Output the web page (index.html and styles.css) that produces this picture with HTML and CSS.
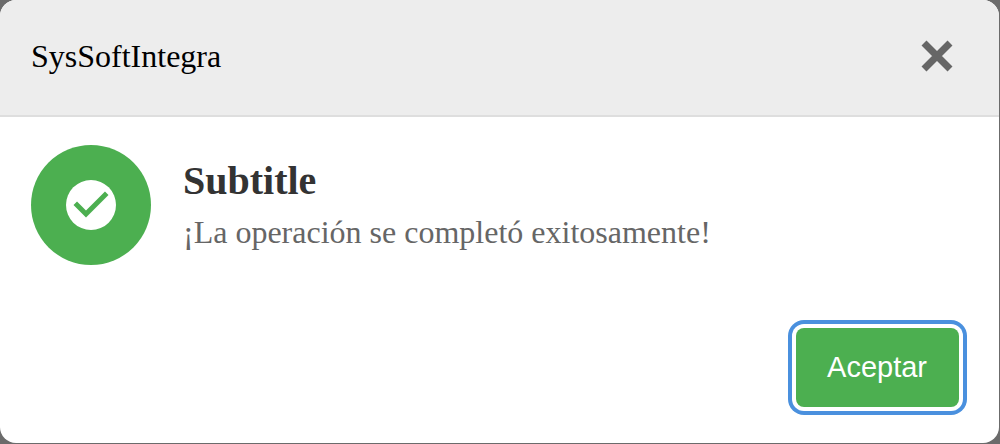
FILE: index.html
```html
<!DOCTYPE html>
<html lang="es">
<head>
  <meta charset="utf-8">
  <meta name="viewport" content="width=device-width, initial-scale=1">
  <title>SysSoftIntegra</title>
  <link rel="stylesheet" href="styles.css">
</head>
<body class="backdrop">
  <div class="dialog" role="dialog" aria-labelledby="dialog-title" aria-describedby="dialog-message">
    <header class="dialog-header">
      <span class="dialog-title" id="dialog-title">SysSoftIntegra</span>
      <button class="close-button" type="button" aria-label="Cerrar">
        <svg class="close-icon" viewBox="0 0 32 32" aria-hidden="true">
          <path d="M3 3L29 29M29 3L3 29" fill="none" stroke="currentColor" stroke-width="7"/>
        </svg>
      </button>
    </header>
    <main class="dialog-body">
      <div class="status-badge">
        <svg class="status-icon" viewBox="0 0 24 24" aria-hidden="true">
          <circle class="status-disc" cx="12" cy="12" r="10"/>
          <path class="status-check" d="M10 17l-5-5 1.41-1.41L10 14.17l7.59-7.59L19 8z"/>
        </svg>
      </div>
      <div class="dialog-text">
        <h1 class="dialog-subtitle">Subtitle</h1>
        <p class="dialog-message" id="dialog-message">¡La operación se completó exitosamente!</p>
      </div>
    </main>
    <footer class="dialog-footer">
      <button class="accept-button" type="button">Aceptar</button>
    </footer>
  </div>
</body>
</html>
```
FILE: styles.css
```css
* {
  box-sizing: border-box;
}

.backdrop {
  margin: 0;
  min-height: 100vh;
  padding: 0 1px 1px 0;
  display: flex;
  background: #6b6b6b;
  font-family: "Liberation Serif", "Times New Roman", serif;
}

.dialog {
  flex: 1;
  display: flex;
  flex-direction: column;
  overflow: hidden;
  border-radius: 16px;
  background: #fff;
}

.dialog-header {
  display: flex;
  align-items: center;
  justify-content: space-between;
  padding: 32px 30px 35px 31px;
  border-bottom: 2px solid #dedede;
  background: #ededed;
}

.dialog-title {
  font-size: 32px;
  line-height: 48px;
  color: #000;
}

.close-button {
  display: flex;
  padding: 8px 16px;
  border: 0;
  background: none;
  color: #666;
}

.close-icon {
  width: 32px;
  height: 32px;
}

.dialog-body {
  display: flex;
  align-items: center;
  gap: 32px;
  padding: 28px 31px;
}

.status-badge {
  flex: none;
  display: flex;
  align-items: center;
  justify-content: center;
  width: 120px;
  height: 120px;
  border-radius: 50%;
  background: #4caf50;
}

.status-icon {
  width: 60px;
  height: 60px;
}

.status-disc {
  fill: #fff;
}

.status-check {
  fill: #4caf50;
}

.dialog-subtitle {
  margin: 0;
  font-size: 40px;
  line-height: 54px;
  font-weight: bold;
  color: #333;
}

.dialog-message {
  margin: 0;
  font-size: 32px;
  line-height: 48px;
  color: #666;
}

.dialog-footer {
  display: flex;
  justify-content: flex-end;
  margin-top: auto;
  padding: 0 40px 36px;
}

.accept-button {
  padding: 19px 32px 20px 31px;
  border: 0;
  border-radius: 8px;
  background: #4caf50;
  box-shadow: 0 0 0 4px #fff, 0 0 0 8px #4a90de;
  font-family: "Liberation Sans", Arial, sans-serif;
  font-size: 29px;
  line-height: 40px;
  color: #fff;
}
```
